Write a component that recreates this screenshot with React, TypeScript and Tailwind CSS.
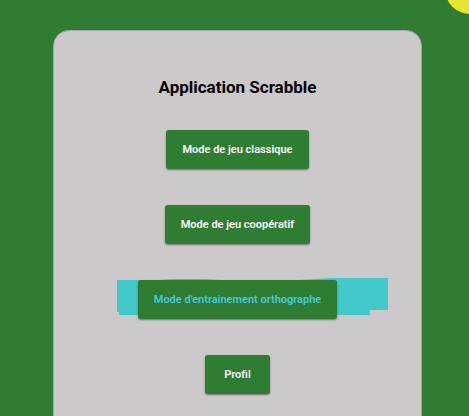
import React from "react";

type ModeButtonProps = {
  label: string;
  highlighted?: boolean;
};

function Highlight() {
  return (
    <svg
      aria-hidden="true"
      className="pointer-events-none absolute -top-0.5 -left-[21px] h-[38px] w-[271px] max-w-none"
      viewBox="0 0 271 38"
      fill="#44c9cb"
    >
      <path d="M0 2H40L55 1H88L105 2H180L200 1L214 0H271V32H253V37H2V34H0Z" />
    </svg>
  );
}

function ModeButton({ label, highlighted = false }: ModeButtonProps) {
  return (
    <div className="relative">
      {highlighted && <Highlight />}
      <button
        type="button"
        className={`relative block h-[39px] min-w-[65px] rounded-[3px] bg-[#2e7d32] px-4 pt-px text-[11px] leading-4 font-semibold shadow-[0_1px_2px_rgba(0,0,0,0.45)] ${
          highlighted ? "text-[#44c9dc]" : "text-white"
        }`}
      >
        {label}
      </button>
    </div>
  );
}

export default function App() {
  return (
    <div className="relative h-screen overflow-hidden bg-[#2e7d32] pt-[30px] pr-[47px] pl-[53px] font-[Roboto,sans-serif]">
      <div className="absolute -top-9 -right-[26px] size-[50px] rounded-full bg-[#e8e532]" />
      <main className="flex min-h-screen flex-col items-center rounded-2xl border border-[#a5a4a4] bg-[#cbc9ca] pt-11">
        <h1 className="text-[17px] leading-6 font-bold text-black">Application Scrabble</h1>
        <nav className="mt-[31px] flex flex-col items-center gap-9">
          <ModeButton label="Mode de jeu classique" />
          <ModeButton label="Mode de jeu coopératif" />
          <ModeButton label="Mode d'entrainement orthographe" highlighted />
          <ModeButton label="Profil" />
        </nav>
      </main>
    </div>
  );
}
